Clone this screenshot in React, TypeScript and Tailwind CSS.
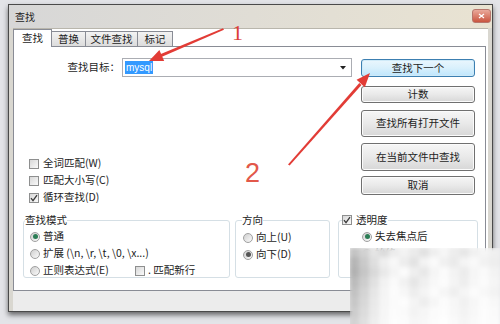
import React from "react";

function Check({ checked }: { checked?: boolean }) {
  return (
    <span className="w-[10px] h-[10px] border border-[#8e8f8f] bg-linear-to-br from-[#d8d8d8] to-[#fafafa] flex items-center justify-center shrink-0">
      {checked && (
        <svg width="8" height="8" viewBox="0 0 8 8">
          <path d="M1 4.2 L3 6.6 L7 1.2" stroke="#3a3a3a" strokeWidth="1.3" fill="none" />
        </svg>
      )}
    </span>
  );
}

function Radio({ checked, dot }: { checked?: boolean; dot?: string }) {
  return (
    <span className="w-[10px] h-[10px] rounded-full border border-[#a0a0a0] bg-linear-to-br from-[#cfcfcf] to-[#fbfbfb] flex items-center justify-center shrink-0">
      {checked && <span className={dot ?? "w-[5px] h-[5px] rounded-full bg-[#2c7d55]"} />}
    </span>
  );
}

function Btn({ children, cls, primary }: { children: React.ReactNode; cls: string; primary?: boolean }) {
  return (
    <div
      className={
        primary
          ? `${cls} w-[114px] rounded-[3px] border border-[#3c7fb1] bg-linear-to-b from-[#eaf6fd] via-[#d9f0fc] to-[#bee6fd] shadow-[inset_0_0_0_1px_#cfeaf8] flex items-center justify-center`
          : `${cls} w-[114px] rounded-[3px] border border-[#707070] bg-linear-to-b from-[#f6f6f6] via-[#e9e9e9] to-[#d7d7d7] shadow-[inset_0_0_0_1px_#fbfbfb] flex items-center justify-center`
      }
    >
      {children}
    </div>
  );
}

const blurGrid: string[][] = [
  ["#c4c4c4", "#d2d2d2", "#e4e4e4", "#dcdcdc", "#ececec", "#f3f3f3", "#ebebeb", "#e2e2e2", "#efefef", "#f6f6f6", "#ededed", "#e7e7e7", "#f1f1f1", "#f5f5f5", "#f0f0f0"],
  ["#b6b6b6", "#cacaca", "#dfdfdf", "#efefef", "#f8f8f8", "#ededed", "#e3e3e3", "#f3f3f3", "#fafafa", "#f1f1f1", "#eaeaea", "#f4f4f4", "#f9f9f9", "#f2f2f2", "#eeeeee"],
  ["#b2b2b2", "#c6c6c6", "#d9d9d9", "#e9e9e9", "#f4f4f4", "#fbfbfb", "#efefef", "#e8e8e8", "#f5f5f5", "#fbfbfb", "#f3f3f3", "#ececec", "#f6f6f6", "#fafafa", "#f3f3f3"],
  ["#bcbcbc", "#cdcdcd", "#e1e1e1", "#f2f2f2", "#fafafa", "#f2f2f2", "#e6e6e6", "#f0f0f0", "#f8f8f8", "#fcfcfc", "#f4f4f4", "#eeeeee", "#f7f7f7", "#fbfbfb", "#f5f5f5"],
  ["#c2c2c2", "#d4d4d4", "#e6e6e6", "#f4f4f4", "#fcfcfc", "#f7f7f7", "#ededed", "#f4f4f4", "#fbfbfb", "#f6f6f6", "#efefef", "#f5f5f5", "#fbfbfb", "#f8f8f8", "#f3f3f3"],
  ["#c8c8c8", "#d8d8d8", "#e9e9e9", "#f5f5f5", "#fbfbfb", "#fdfdfd", "#f4f4f4", "#eeeeee", "#f6f6f6", "#fcfcfc", "#f7f7f7", "#f1f1f1", "#f7f7f7", "#fcfcfc", "#f8f8f8"],
  ["#cdcdcd", "#dcdcdc", "#ebebeb", "#f6f6f6", "#fcfcfc", "#fafafa", "#f3f3f3", "#f6f6f6", "#fbfbfb", "#fdfdfd", "#f8f8f8", "#f3f3f3", "#f8f8f8", "#fdfdfd", "#fafafa"],
  ["#d3d3d3", "#e0e0e0", "#eeeeee", "#f7f7f7", "#fdfdfd", "#fcfcfc", "#f6f6f6", "#f8f8f8", "#fcfcfc", "#fefefe", "#fafafa", "#f5f5f5", "#f9f9f9", "#fdfdfd", "#fbfbfb"],
];

export default function App() {
  return (
    <div className="relative w-[500px] h-[324px] overflow-hidden bg-[#e3e4e8] font-['Noto_Sans_CJK_SC','Liberation_Sans',sans-serif] text-[10.5px] leading-none text-[#1d1d1d]">
      <div className="pt-[4px] pl-[8px]">
        <div className="w-[485px] h-[308px] border border-[#4a4a4a] flex flex-col bg-[#d9d7d0] shadow-[0_3px_5px_rgba(0,0,0,0.55)]">
          {/* title bar */}
          <div className="h-[23px] flex items-center justify-between pl-[6px] pr-[1px] bg-linear-to-r from-[#d7d7d7] via-[#e0ddd5] to-[#e9e3d2]">
            <span className="text-[10px] text-[#222] mt-[1px]">查找</span>
            <span className="w-[19px] h-[14px] mb-[2px] rounded-[3px] border border-[#b7766c] bg-linear-to-b from-[#e9a99b] to-[#c9543f] flex items-center justify-center">
              <svg width="7" height="6" viewBox="0 0 7 6">
                <path d="M1 1 L6 5 M6 1 L1 5" stroke="#fff" strokeWidth="1.2" />
              </svg>
            </span>
          </div>
          {/* client */}
          <div className="flex-1 flex px-[4px]">
            <div className="flex-1 bg-white border-t border-[#b9b6ac] flex flex-col">
              {/* tabs */}
              <div className="h-[17px] flex items-end">
                <div className="relative z-10 -mb-px w-[39px] h-[18px] bg-white border border-b-0 border-[#898c95] flex items-center justify-center">
                  查找
                </div>
                <div className="-ml-px w-[35px] h-[15px] border border-b-0 border-[#898c95] bg-linear-to-b from-[#f3f3f3] to-[#dcdcdc] flex items-center justify-center">
                  普换
                </div>
                <div className="-ml-px w-[53px] h-[15px] border border-b-0 border-[#898c95] bg-linear-to-b from-[#f3f3f3] to-[#dcdcdc] flex items-center justify-center">
                  文件查找
                </div>
                <div className="-ml-px w-[36px] h-[15px] border border-b-0 border-[#898c95] bg-linear-to-b from-[#f3f3f3] to-[#dcdcdc] flex items-center justify-center">
                  标记
                </div>
              </div>
              {/* panel */}
              <div className="w-[473px] h-[245px] border border-[#898c95] bg-white flex flex-col pt-[11px]">
                <div className="h-[148px] flex">
                  <div className="w-[347px] flex flex-col">
                    <div className="h-[19px] flex items-center">
                      <span className="w-[106px] text-right">查找目标：</span>
                      <div className="ml-[2px] w-[230px] h-[19px] border border-[#abadb3] bg-white flex items-center justify-between">
                        <span className="ml-[2px] px-[1px] h-[13px] bg-[#3399ff] text-white text-[10px] flex items-center font-['Liberation_Sans',sans-serif]">
                          mysql
                        </span>
                        <svg className="mr-[5px]" width="6" height="4" viewBox="0 0 6 4">
                          <path d="M0 0 L6 0 L3 3.5 Z" fill="#222" />
                        </svg>
                      </div>
                    </div>
                    <div className="mt-auto flex flex-col pl-[15px]">
                      <div className="h-[17px] flex items-center gap-[4px]">
                        <Check />
                        <span>全词匹配(W)</span>
                      </div>
                      <div className="h-[17px] flex items-center gap-[4px]">
                        <Check />
                        <span>匹配大小写(C)</span>
                      </div>
                      <div className="h-[17px] flex items-center gap-[4px]">
                        <Check checked />
                        <span>循环查找(D)</span>
                      </div>
                    </div>
                  </div>
                  <div className="w-[114px] flex flex-col">
                    <Btn cls="mt-[1px] h-[18px]" primary>
                      查找下一个
                    </Btn>
                    <Btn cls="mt-[9px] h-[17px]">计数</Btn>
                    <Btn cls="mt-[7px] h-[27px]">查找所有打开文件</Btn>
                    <Btn cls="mt-[6px] h-[28px]">在当前文件中查找</Btn>
                    <Btn cls="mt-[5px] h-[19px]">取消</Btn>
                  </div>
                </div>
                {/* groups */}
                <div className="mt-[8px] flex items-start pl-[9px]">
                  <fieldset className="w-[207px] h-[64px] border border-[#d5dfe5] rounded-[3px]">
                    <legend className="ml-[1px] h-[12px] leading-[12px]">查找模式</legend>
                    <div className="pt-[2px] pl-[6px] flex flex-col">
                      <div className="h-[17px] flex items-center gap-[3px]">
                        <Radio checked />
                        <span>普通</span>
                      </div>
                      <div className="h-[17px] flex items-center gap-[3px]">
                        <Radio />
                        <span>扩展 (\n, \r, \t, \0, \x...)</span>
                      </div>
                      <div className="h-[17px] flex items-center">
                        <div className="w-[105px] flex items-center gap-[3px]">
                          <Radio />
                          <span>正则表达式(E)</span>
                        </div>
                        <Check />
                        <span className="ml-[3px]">. 匹配新行</span>
                      </div>
                    </div>
                  </fieldset>
                  <fieldset className="ml-[5px] w-[95px] h-[64px] border border-[#d5dfe5] rounded-[3px]">
                    <legend className="ml-[6px] h-[12px] leading-[12px]">方向</legend>
                    <div className="pt-[3px] pl-[7px] flex flex-col">
                      <div className="h-[17px] flex items-center gap-[3px]">
                        <Radio />
                        <span>向上(U)</span>
                      </div>
                      <div className="h-[17px] flex items-center gap-[3px]">
                        <Radio checked dot="w-[5px] h-[5px] rounded-full bg-[#555]" />
                        <span>向下(D)</span>
                      </div>
                    </div>
                  </fieldset>
                  <fieldset className="ml-[8px] w-[140px] h-[64px] border border-[#d5dfe5] rounded-[3px]">
                    <legend className="ml-[3px] h-[12px] flex items-center gap-[4px]">
                      <Check checked />
                      <span>透明度</span>
                    </legend>
                    <div className="pt-[2px] pl-[23px] flex flex-col">
                      <div className="h-[17px] flex items-center gap-[3px]">
                        <Radio checked />
                        <span>失去焦点后</span>
                      </div>
                      <div className="h-[17px] flex items-center gap-[3px]">
                        <Radio />
                        <span>始终</span>
                      </div>
                    </div>
                  </fieldset>
                </div>
              </div>
              <div className="flex-1 w-[473px] bg-[#ececec]" />
            </div>
          </div>
        </div>
      </div>

      {/* blurred watermark region */}
      <svg className="absolute left-[350px] top-[248px]" width="150" height="76" viewBox="0 0 150 76">
        <defs>
          <filter id="bl" x="-10%" y="-10%" width="120%" height="120%">
            <feGaussianBlur stdDeviation="2.2" />
          </filter>
        </defs>
        <g filter="url(#bl)">
          {blurGrid.map((row, r) =>
            row.map((c, i) => <rect key={`${r}-${i}`} x={i * 10 - 1} y={r * 10 - 1} width="12" height="12" fill={c} />)
          )}
        </g>
      </svg>

      {/* annotations */}
      <svg className="absolute left-0 top-0 pointer-events-none" width="500" height="324" viewBox="0 0 500 324">
        <path d="M223 28.2 L224 29.8 L158.5 58.2 L157.2 55.4 Z" fill="#e23c36" />
        <polygon points="149,61 164.2,60.9 159.4,49.9" fill="#e23c36" />
        <path d="M288 164.5 L289.6 165.4 L361.5 85 L359.3 83 Z" fill="#e23c36" />
        <polygon points="370,73 364.8,87.2 356.6,79.8" fill="#e23c36" />
      </svg>
      <span className="absolute left-[232px] top-[22px] text-[22px] leading-none text-[#dc3f38] font-['Liberation_Serif',serif]">
        1
      </span>
      <span className="absolute left-[245px] top-[160px] text-[27px] leading-none text-[#e2584a] font-['Liberation_Sans',sans-serif] font-light">
        2
      </span>
    </div>
  );
}
